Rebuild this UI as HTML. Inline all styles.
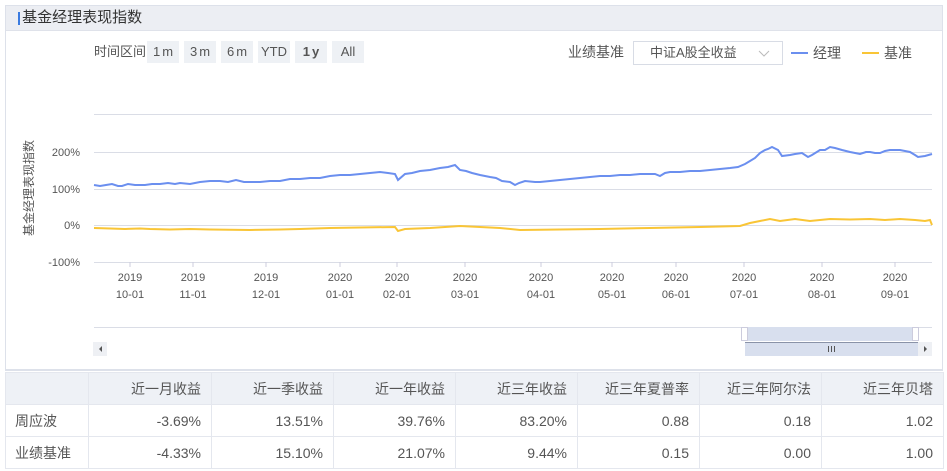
<!DOCTYPE html>
<html><head><meta charset="utf-8"><style>
*{margin:0;padding:0;box-sizing:border-box}
body{width:947px;height:471px;background:#fff;font-family:"Liberation Sans","Noto Sans CJK SC",sans-serif;color:#555;position:relative;overflow:hidden}
.abs{position:absolute}
.box{left:5px;top:5px;width:938px;height:366px;border:1px solid #dde1ea;border-bottom:2px solid #dde1ea}
.hdr{left:6px;top:6px;width:936px;height:25px;background:#eceef3;border-bottom:1px solid #dfe2ea}
.ttl{left:18px;top:8px;font-size:15px;color:#333;line-height:20px}
.bar{left:18px;top:12px;width:2px;height:13px;background:#3a7be0}
.btn{top:41px;height:22px;background:#eef1f5;font-size:13px;line-height:22px;text-align:center;color:#555;letter-spacing:2px;text-indent:2px}
table{position:absolute;left:5px;top:372px;border-collapse:collapse;font-size:14px}
td{border:1px solid #e4e7ee;height:32px;text-align:right;padding-right:10px;color:#555}
tr:first-child td{background:#eef1f6;color:#555}
td:first-child{text-align:left;padding-left:9px}
</style></head><body>
<div class="abs box"></div>
<div class="abs hdr"></div>
<div class="abs bar"></div>
<div class="abs ttl">&nbsp;基金经理表现指数</div>
<div class="abs" style="left:94px;top:41px;font-size:13px;line-height:22px">时间区间</div>
<div class="abs btn" style="left:147px;width:32px">1m</div>
<div class="abs btn" style="left:184px;width:32px">3m</div>
<div class="abs btn" style="left:221px;width:32px">6m</div>
<div class="abs btn" style="left:258px;width:32px;letter-spacing:0;text-indent:0">YTD</div>
<div class="abs btn" style="left:295px;width:32px;font-weight:bold">1y</div>
<div class="abs btn" style="left:332px;width:32px;letter-spacing:0;text-indent:0">All</div>
<div class="abs" style="left:568px;top:42px;font-size:14px;line-height:20px">业绩基准</div>
<div class="abs" style="left:633px;top:41px;width:150px;height:24px;border:1px solid #d8dce5;font-size:13px;line-height:22px;padding-left:16px;color:#555">中证A股全收益
<svg style="position:absolute;right:12px;top:8px" width="12" height="7"><path d="M1,1 L6,6 L11,1" fill="none" stroke="#bbb" stroke-width="1"/></svg></div>
<div class="abs" style="left:791px;top:52px;width:17px;height:2px;background:#6b8fef"></div>
<div class="abs" style="left:813px;top:43px;font-size:14px;line-height:20px">经理</div>
<div class="abs" style="left:862px;top:52px;width:17px;height:2px;background:#f9c536"></div>
<div class="abs" style="left:884px;top:43px;font-size:14px;line-height:20px">基准</div>
<svg class="abs" style="left:0;top:0" width="947" height="371" font-family="Liberation Sans, Noto Sans CJK SC, sans-serif" font-size="11" fill="#555">
<g stroke="#dadde6" stroke-width="1">
<line x1="94" y1="114.5" x2="932" y2="114.5"/><line x1="94" y1="152.5" x2="932" y2="152.5"/><line x1="94" y1="189.5" x2="932" y2="189.5"/><line x1="94" y1="225.5" x2="932" y2="225.5"/><line x1="94" y1="262.5" x2="932" y2="262.5"/>
<line x1="94" y1="327.5" x2="932" y2="327.5"/>
</g>
<g text-anchor="end"><text x="80" y="156">200%</text><text x="80" y="193">100%</text><text x="80" y="229">0%</text><text x="80" y="266">-100%</text></g>
<text transform="translate(33,188) rotate(-90)" text-anchor="middle" font-size="12">基金经理表现指数</text>
<g text-anchor="middle" font-size="11">
<g stroke="#ccd" ><line x1="130" y1="262" x2="130" y2="267"/><line x1="193" y1="262" x2="193" y2="267"/><line x1="266" y1="262" x2="266" y2="267"/><line x1="340" y1="262" x2="340" y2="267"/><line x1="397" y1="262" x2="397" y2="267"/><line x1="465" y1="262" x2="465" y2="267"/><line x1="541" y1="262" x2="541" y2="267"/><line x1="612" y1="262" x2="612" y2="267"/><line x1="676" y1="262" x2="676" y2="267"/><line x1="744" y1="262" x2="744" y2="267"/><line x1="822" y1="262" x2="822" y2="267"/><line x1="895" y1="262" x2="895" y2="267"/></g>
<text x="130" y="281">2019</text><text x="130" y="298">10-01</text>
<text x="193" y="281">2019</text><text x="193" y="298">11-01</text>
<text x="266" y="281">2019</text><text x="266" y="298">12-01</text>
<text x="340" y="281">2020</text><text x="340" y="298">01-01</text>
<text x="397" y="281">2020</text><text x="397" y="298">02-01</text>
<text x="465" y="281">2020</text><text x="465" y="298">03-01</text>
<text x="541" y="281">2020</text><text x="541" y="298">04-01</text>
<text x="612" y="281">2020</text><text x="612" y="298">05-01</text>
<text x="676" y="281">2020</text><text x="676" y="298">06-01</text>
<text x="744" y="281">2020</text><text x="744" y="298">07-01</text>
<text x="822" y="281">2020</text><text x="822" y="298">08-01</text>
<text x="895" y="281">2020</text><text x="895" y="298">09-01</text>
</g>
<polyline fill="none" stroke="#f9c536" stroke-width="2" points="94,228 110,228.5 125,229 140,228.5 150,229 170,229.5 190,229 210,229.5 250,230 280,229.5 300,229 330,228 360,227.5 395,227 398,231 405,229 430,228 460,226 480,227 500,228 520,230 560,229.5 600,229 650,228 700,227 740,226 750,223 760,221 770,219 780,221 795,219 810,221 830,219 850,219.5 870,219 885,220 900,219 915,220 925,221 930,220 932,225"/>
<polyline fill="none" stroke="#6b8fef" stroke-width="2" points="94,185 100,186 106,185 112,184 118,186 122,186 128,184 135,185 145,185 152,184 160,184 168,183 175,184 180,183 190,184 200,182 210,181 220,181 228,182 236,180 244,182 252,182 260,182 270,181 280,181 290,179 300,179 310,178 320,178 330,176 340,175 350,175 360,174 370,173 380,172 388,173 395,174 398,180 405,174 412,173 420,171 430,170 440,168 448,167 455,165 460,170 466,171 472,173 480,175 490,177 496,178 502,181 510,182 515,185 519,183 525,181 535,182 540,182 550,181 560,180 570,179 580,178 590,177 600,176 610,176 620,175 630,175 640,174 648,174 655,174 660,176 665,173 670,172 680,172 690,171 700,171 710,170 720,169 730,168 738,167 745,164 750,161 755,158 760,153 765,150 768,149 772,147 778,150 782,156 790,155 795,154 802,153 808,157 812,155 820,150 825,150 830,147 835,148 842,150 850,152 860,154 866,152 870,152 875,153 880,153 885,151 890,150 900,150 905,151 910,152 915,155 918,157 925,156 932,154"/>
<rect x="747" y="327" width="168" height="14" fill="#d8dfee"/>
<rect x="741.5" y="327.5" width="6" height="13" fill="#fff" stroke="#ccd"/>
<rect x="912.5" y="327.5" width="6" height="13" fill="#fff" stroke="#ccd"/>
<rect x="745" y="342" width="173" height="14" fill="#d8dfee"/>
<line x1="745" y1="342.5" x2="918" y2="342.5" stroke="#8a93a8"/>
<g stroke="#555"><line x1="828.5" y1="346" x2="828.5" y2="352"/><line x1="831.5" y1="346" x2="831.5" y2="352"/><line x1="834.5" y1="346" x2="834.5" y2="352"/></g>
<rect x="93" y="342" width="14" height="14" fill="#eef0f4"/><path d="M99,349 L102,346 L102,352Z" fill="#555"/>
<rect x="918" y="342" width="14" height="14" fill="#eef0f4"/><path d="M927,349 L924,346 L924,352Z" fill="#555"/>
</svg>
<table>
<tr><td style="width:83px"></td><td style="width:123px">近一月收益</td><td style="width:122px">近一季收益</td><td style="width:122px">近一年收益</td><td style="width:122px">近三年收益</td><td style="width:122px">近三年夏普率</td><td style="width:122px">近三年阿尔法</td><td style="width:122px">近三年贝塔</td></tr>
<tr><td>周应波</td><td>-3.69%</td><td>13.51%</td><td>39.76%</td><td>83.20%</td><td>0.88</td><td>0.18</td><td>1.02</td></tr>
<tr><td>业绩基准</td><td>-4.33%</td><td>15.10%</td><td>21.07%</td><td>9.44%</td><td>0.15</td><td>0.00</td><td>1.00</td></tr>
</table>
</body></html>
